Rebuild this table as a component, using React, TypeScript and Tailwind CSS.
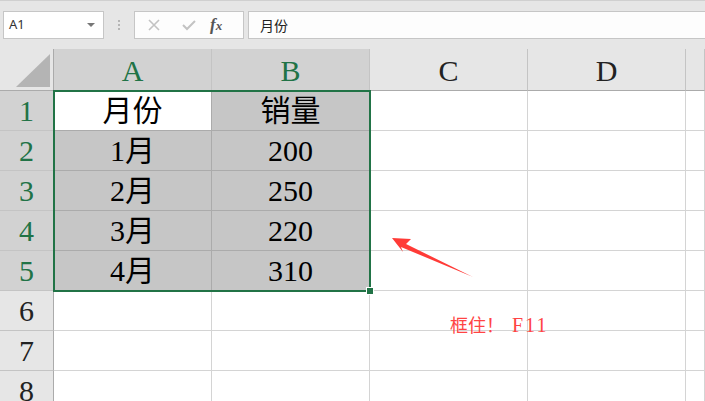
import React from "react";

const serif = { fontFamily: '"Liberation Serif", "Noto Sans CJK SC", serif' };

const cols = ["A", "B", "C", "D", ""];
const data: string[][] = [
  ["月份", "销量"],
  ["1月", "200"],
  ["2月", "250"],
  ["3月", "220"],
  ["4月", "310"],
  ["", ""],
  ["", ""],
  ["", ""],
];

export default function App() {
  return (
    <div className="relative w-[705px] h-[401px] overflow-hidden bg-white select-none">
      {/* Formula bar */}
      <div className="h-[49px] bg-[#e6e6e6] border-t border-[#d0d0d0] flex items-start pt-[10px]">
        <div className="ml-[3px] w-[101px] h-[28px] bg-white border border-[#c6c6c6] flex items-center justify-between px-[5px]">
          <span className="text-[13px] text-[#333]" style={{ fontFamily: '"Noto Sans", sans-serif' }}>
            A1
          </span>
          <span className="w-0 h-0 border-l-[4px] border-r-[4px] border-t-[4px] border-l-transparent border-r-transparent border-t-[#777] mr-[3px]" />
        </div>
        <div className="w-[30px] h-[28px] flex flex-col items-center justify-center gap-[2px]">
          <span className="w-[2px] h-[2px] bg-[#b5b5b5]" />
          <span className="w-[2px] h-[2px] bg-[#b5b5b5]" />
          <span className="w-[2px] h-[2px] bg-[#b5b5b5]" />
        </div>
        <div className="w-[110px] h-[28px] bg-[#fdfdfd] border border-[#c6c6c6] flex items-center">
          <svg width="36" height="26" viewBox="0 0 36 26" className="ml-[1px]">
            <path d="M13 8 L23 18 M23 8 L13 18" stroke="#c3c3c3" strokeWidth="1.6" />
          </svg>
          <svg width="34" height="26" viewBox="0 0 34 26">
            <path d="M11 13 L15 17 L23 9" stroke="#c3c3c3" strokeWidth="2" fill="none" />
          </svg>
          <span className="ml-[4px] text-[17px] italic font-bold text-[#555]" style={serif}>
            f<span className="text-[13px]">x</span>
          </span>
        </div>
        <div className="ml-[4px] flex-1 h-[28px] bg-[#fdfdfd] border-y border-l border-[#c6c6c6] flex items-center pl-[11px]">
          <span className="text-[14px] text-[#222]" style={{ fontFamily: '"Noto Sans CJK SC", sans-serif' }}>
            月份
          </span>
        </div>
      </div>

      {/* Sheet grid */}
      <div className="grid grid-cols-[54px_158px_158px_158px_158px_1fr] grid-rows-[42px_repeat(8,40px)]" style={serif}>
        <div className="relative bg-[#e6e6e6] border-r border-b border-[#ababab]">
          <svg className="absolute left-[15px] top-[5px]" width="36" height="34" viewBox="0 0 36 34">
            <polygon points="1,33 35,0 35,33" fill="#b4b4b4" />
          </svg>
        </div>
        {cols.map((c, i) => {
          const sel = i < 2;
          return (
            <div
              key={c + i}
              className={`flex items-center justify-center pt-[2px] text-[30px] border-r border-b border-r-[#c4c4c4] border-b-[#ababab] ${
                sel ? "bg-[#d2d2d2] text-[#217346]" : "bg-[#e6e6e6] text-[#222]"
              }`}
            >
              {c}
            </div>
          );
        })}
        {data.map((row, r) => {
          const selRow = r < 5;
          return (
            <React.Fragment key={r}>
              <div
                className={`flex items-center justify-center text-[30px] border-r border-b border-r-[#ababab] border-b-[#c4c4c4] ${
                  selRow ? "bg-[#d2d2d2] text-[#217346]" : "bg-[#e6e6e6] text-[#222]"
                }`}
              >
                {r + 1}
              </div>
              {[0, 1, 2, 3, 4].map((c) => {
                const inSel = selRow && c < 2;
                const active = r === 0 && c === 0;
                return (
                  <div
                    key={c}
                    className={`flex items-center justify-center text-[30px] text-black border-r border-b ${
                      inSel
                        ? active
                          ? "bg-white border-[#ababab]"
                          : "bg-[#c6c6c6] border-[#ababab]"
                        : "bg-white border-[#d4d4d4]"
                    }`}
                  >
                    {c < 2 ? row[c] : ""}
                  </div>
                );
              })}
            </React.Fragment>
          );
        })}
      </div>

      {/* Selection border + fill handle */}
      <div className="absolute left-[53px] top-[90px] w-[318px] h-[202px] border-2 border-[#217346] pointer-events-none" />
      <div className="absolute left-[366px] top-[287px] w-[8px] h-[8px] bg-[#217346] border border-white" />

      {/* Annotation */}
      <svg className="absolute left-[388px] top-[234px]" width="90" height="48" viewBox="0 0 90 48">
        <polygon points="4,4 23,5 18,10 85,43 13,13 15,18" fill="#ff3b37" />
      </svg>
      <div
        className="absolute left-[450px] top-[313px] flex items-baseline text-[#ff4444] leading-[24px]"
        style={serif}
      >
        <span className="text-[18px]">框住！</span>
        <span className="ml-[8px] text-[20px] tracking-[2px]">F11</span>
      </div>
    </div>
  );
}
